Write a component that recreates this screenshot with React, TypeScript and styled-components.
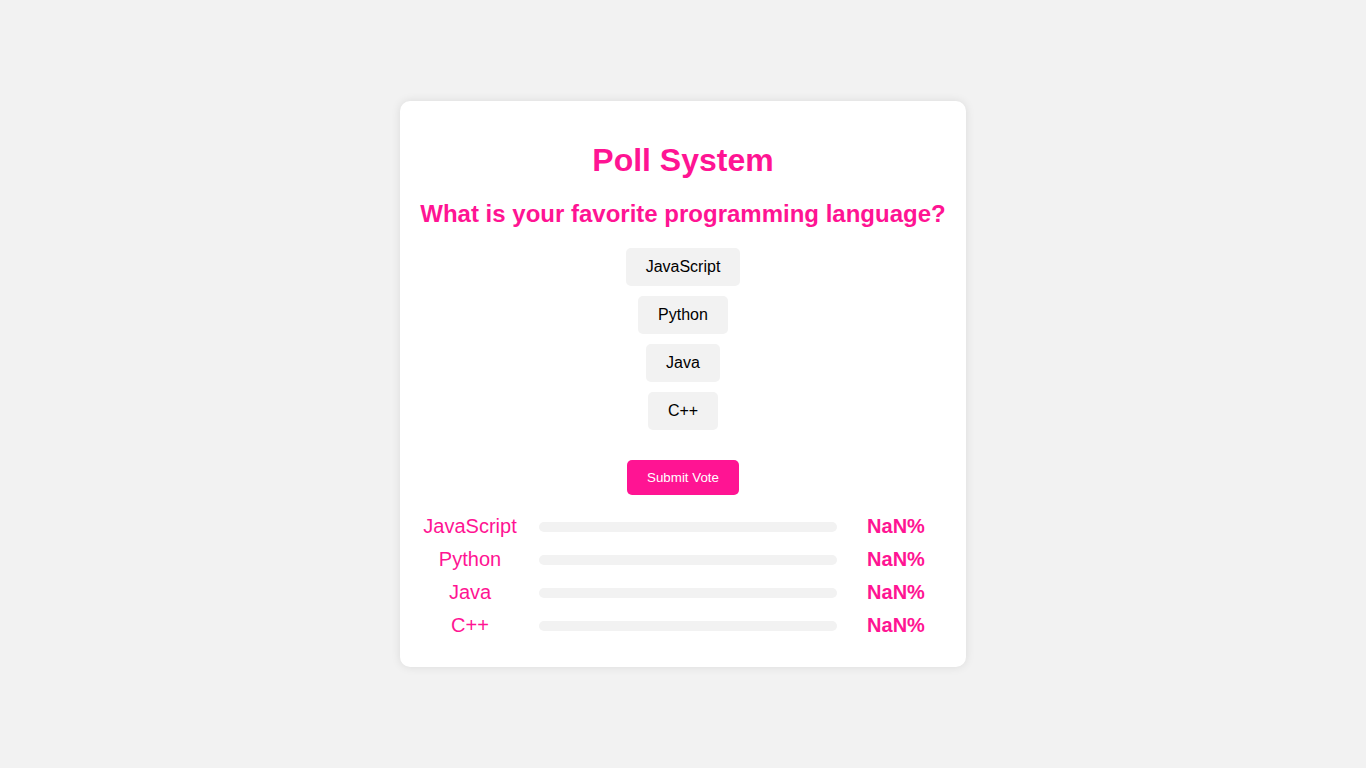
import React, { useState } from 'react';
import styled, { createGlobalStyle } from 'styled-components';

const GlobalStyle = createGlobalStyle`
  html, body {
    margin: 0;
    padding: 0;
    background-color: #f2f2f2;
    font-family: "Liberation Sans", Arial, sans-serif;
  }
`;

const Page = styled.div`
  height: 100vh;
  display: flex;
  align-items: center;
  justify-content: center;
`;

const Card = styled.div`
  background-color: #fff;
  width: 566px;
  box-sizing: border-box;
  padding: 20px;
  border-radius: 10px;
  box-shadow: 0 0 10px rgba(0, 0, 0, 0.1);
  text-align: center;
`;

const Title = styled.h1`
  color: #ff1493;
  font-size: 32px;
  margin: 21px 0;
`;

const Question = styled.h2`
  color: #ff1493;
  font-size: 24px;
  margin: 20px 0;
  white-space: nowrap;
`;

const Options = styled.div`
  display: flex;
  flex-direction: column;
  align-items: center;
  gap: 10px;
  margin-bottom: 30px;
`;

const Option = styled.button<{ $active: boolean }>`
  font-family: inherit;
  font-size: 16px;
  line-height: 18px;
  padding: 10px 20px;
  border: none;
  border-radius: 5px;
  color: ${(p) => (p.$active ? '#fff' : '#000')};
  background-color: ${(p) => (p.$active ? '#ff1493' : '#f2f2f2')};
  cursor: pointer;
`;

const Submit = styled.button`
  font-family: inherit;
  font-size: 13.33px;
  line-height: 15px;
  padding: 10px 20px;
  border: none;
  border-radius: 5px;
  color: #fff;
  background-color: #ff1493;
  cursor: pointer;
`;

const Results = styled.div`
  margin-top: 20px;
`;

const Row = styled.div`
  display: flex;
  align-items: center;
  margin-bottom: 10px;
`;

const Label = styled.span`
  width: 100px;
  font-size: 20px;
  line-height: 23px;
  color: #ff1493;
`;

const Bar = styled.div`
  flex: 1;
  height: 10px;
  margin: 0 9px 0 19px;
  border-radius: 5px;
  background-color: #f2f2f2;
  overflow: hidden;
`;

const Fill = styled.div`
  height: 100%;
  background-color: #ff1493;
`;

const Percent = styled.span`
  width: 100px;
  font-size: 20px;
  line-height: 23px;
  font-weight: bold;
  color: #ff1493;
`;

const languages = ['JavaScript', 'Python', 'Java', 'C++'];

const App: React.FC = () => {
  const [selected, setSelected] = useState<string | null>(null);
  const [votes, setVotes] = useState<{ [key: string]: number }>({
    JavaScript: 0,
    Python: 0,
    Java: 0,
    'C++': 0,
  });
  const total = Object.values(votes).reduce((a, b) => a + b, 0);

  return (
    <Page>
      <GlobalStyle />
      <Card>
        <Title>Poll System</Title>
        <Question>What is your favorite programming language?</Question>
        <Options>
          {languages.map((lang) => (
            <Option
              key={lang}
              $active={selected === lang}
              onClick={() => setSelected(lang)}
            >
              {lang}
            </Option>
          ))}
        </Options>
        <Submit
          onClick={() => {
            if (selected) {
              setVotes({ ...votes, [selected]: votes[selected] + 1 });
              setSelected(null);
            }
          }}
        >
          Submit Vote
        </Submit>
        <Results>
          {languages.map((lang) => {
            const pct = (votes[lang] / total) * 100;
            return (
              <Row key={lang}>
                <Label>{lang}</Label>
                <Bar>
                  <Fill style={{ width: `${isNaN(pct) ? 0 : pct}%` }} />
                </Bar>
                <Percent>{isNaN(pct) ? 'NaN' : pct.toFixed(1)}%</Percent>
              </Row>
            );
          })}
        </Results>
      </Card>
    </Page>
  );
};

export default App;
